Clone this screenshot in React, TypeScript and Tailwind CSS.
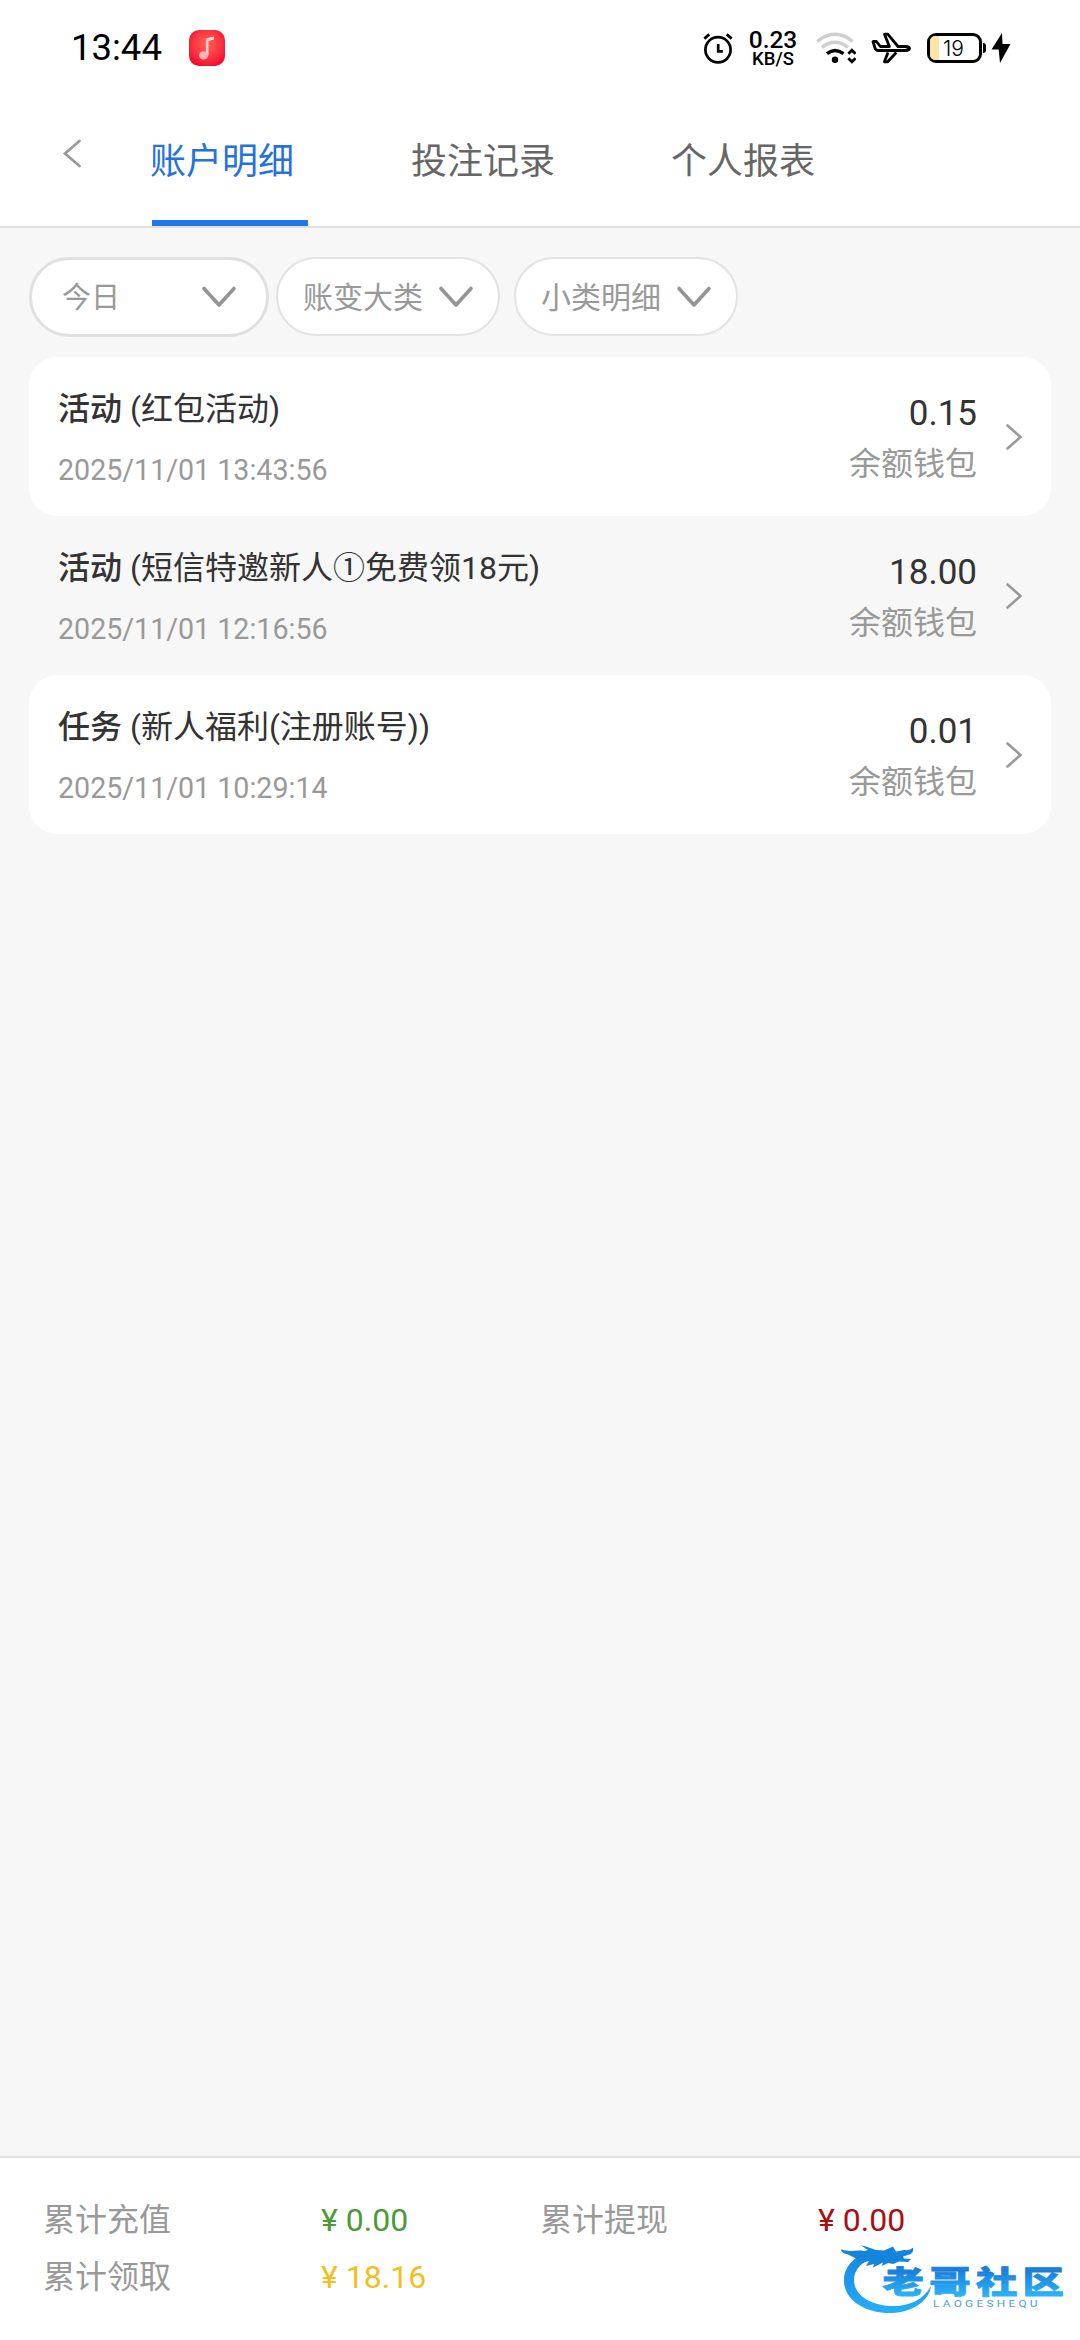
import clsx from 'clsx';

const tabs = ['账户明细', '投注记录', '个人报表'];

interface Entry {
  kind: string;
  detail: string;
  time: string;
  amount: string;
}

const entries: Entry[] = [
  { kind: '活动', detail: '(红包活动)', time: '2025/11/01 13:43:56', amount: '0.15' },
  { kind: '活动', detail: '(短信特邀新人①免费领18元)', time: '2025/11/01 12:16:56', amount: '18.00' },
  { kind: '任务', detail: '(新人福利(注册账号))', time: '2025/11/01 10:29:14', amount: '0.01' },
];

function StatusBar() {
  return (
    <div className="flex h-[96px] shrink-0 items-center pl-[71px] pr-[69px] text-black">
      <span className="w-[118px] pt-px text-[36.5px] leading-none">13:44</span>
      <svg className="h-9 w-9" viewBox="0 0 36 36">
        <defs>
          <radialGradient id="music" cx="50%" cy="40%" r="65%">
            <stop offset="0" stopColor="#ff6258" />
            <stop offset="0.6" stopColor="#fb3440" />
            <stop offset="1" stopColor="#ee0a2c" />
          </radialGradient>
        </defs>
        <rect width="36" height="36" rx="10" fill="url(#music)" />
        <path d="M18.2 25V10.4l5-2.3" fill="none" stroke="#ffd0cc" strokeWidth="2.6" />
        <path d="M17 8.5l8-2v3l-6 1.6z" fill="#ffd0cc" />
        <ellipse cx="14.6" cy="25.4" rx="4.6" ry="4.2" fill="#ffb3b0" />
      </svg>

      <div className="ml-auto flex items-center">
        {/* Alarm */}
        <svg className="h-8 w-[30px]" viewBox="0 0 30 32" fill="none" stroke="#000" strokeWidth="2.7">
          <circle cx="15" cy="17.8" r="12.6" />
          <path d="M15.2 12v7.3h4.6M1.3 6.6l5-4.2M28.7 6.6l-5-4.2" />
        </svg>
        <div className="ml-[15px] flex w-[50px] flex-col items-center font-medium">
          <span className="text-[24.5px] leading-[22px]">0.23</span>
          <span className="text-[18.5px] leading-[17px]">KB/S</span>
        </div>
        {/* Wifi */}
        <svg className="ml-[18px] h-8 w-10" viewBox="0 0 40 32" fill="none">
          <path d="M1.5 9.5C11.5-.2 26.5-.2 36.5 9.5" stroke="#cfcfcf" strokeWidth="3.4" />
          <path d="M6 15.5c8-7 18-7 26 0" stroke="#cfcfcf" strokeWidth="3.4" />
          <path d="M11 21.6c5-4 11-4 16.5 0" stroke="#000" strokeWidth="3.5" />
          <circle cx="19" cy="27.8" r="3.2" fill="#000" />
          <path d="M32.3 21.8l3.6-3.6 3.6 3.6M32.3 26.2l3.6 3.6 3.6-3.6" stroke="#000" strokeWidth="2.8" />
        </svg>
        {/* Airplane mode */}
        <svg
          className="ml-[15px] h-8 w-10"
          viewBox="0 0 40 32"
          fill="none"
          stroke="#000"
          strokeWidth="2.8"
          strokeLinejoin="round"
        >
          <path d="M2 9.5h3.4l4 5h9L13.5 2.2h3.3l10.2 12.3h7c3 0 4.5 1 4.5 2s-1.5 2-4.5 2H7.5c-2 0-3-1-3.5-2.5z" />
          <path d="M17 20.5l-3.6 9.3h3.3l8.6-9.3" />
        </svg>
        {/* Battery */}
        <div className="ml-[16px] flex h-[30px] w-[55px] items-center rounded-[9px] border-3 border-black">
          <div className="h-6 w-[9px] rounded-l-[5px] bg-[#fbe6a8]" />
          <span className="ml-[4px] font-[Inter] text-[21px] leading-none font-light">19</span>
        </div>
        <div className="ml-[1px] h-[10px] w-[3px] rounded-r bg-black" />
        <svg className="ml-[5px] h-8 w-5" viewBox="0 0 20 32">
          <path d="M11 1L.5 17.5h7.2L9 31 19.5 12h-8z" fill="#000" />
        </svg>
      </div>
    </div>
  );
}

function Header() {
  return (
    <div className="flex h-[132px] shrink-0 border-b-2 border-[#e0e0e0]">
      <div className="w-[152px] pt-[43px] pl-[62px]">
        <svg className="h-[30px] w-5" viewBox="0 0 20 30" fill="none" stroke="#999" strokeWidth="2.7" strokeLinecap="round">
          <path d="M17.5 2L3 14.5 17.5 27" />
        </svg>
      </div>
      {tabs.map((tab, index) => (
        <div
          key={tab}
          className={clsx(
            'mr-[104px] flex h-[130px] w-[156px] items-center border-b-6 pt-[8px] text-[36px]',
            index === 0 ? 'border-[#2176ee] text-[#2672dc]' : 'border-transparent text-[#666]'
          )}
        >
          <span className={clsx('whitespace-nowrap', index === 0 ? '-ml-0.5' : '-ml-px')}>{tab}</span>
        </div>
      ))}
    </div>
  );
}

function ChevronDown() {
  return (
    <svg className="h-6 w-9" viewBox="0 0 36 24" fill="none" stroke="#949494" strokeWidth="3.6" strokeLinecap="round">
      <path d="M3 3.5l15 16.5 15-16.5" strokeLinejoin="round" />
    </svg>
  );
}

function Filters() {
  return (
    <div className="flex items-start pt-[29px] pl-[29px] text-[30px] leading-none text-[#999]">
      <div className="flex h-[80px] w-[240px] items-center justify-between rounded-full border-3 border-[#e0e0e0] bg-white pr-[29px] pl-[30px]">
        <span className="pt-[3px] text-[29px]">今日</span>
        <ChevronDown />
      </div>
      <div className="ml-[7px] flex h-[79px] w-[224px] items-center justify-between rounded-full border-2 border-[#e3e3e3] bg-white pr-[24px] pl-[25px]">
        <span className="pt-[3px]">账变大类</span>
        <ChevronDown />
      </div>
      <div className="ml-[14px] flex h-[79px] w-[224px] items-center justify-between rounded-full border-2 border-[#e3e3e3] bg-white pr-[24px] pl-[25px]">
        <span className="pt-[3px]">小类明细</span>
        <ChevronDown />
      </div>
    </div>
  );
}

function EntryRow({ entry, striped }: { entry: Entry; striped: boolean }) {
  return (
    <div className={clsx('flex h-[159px] items-start rounded-[28px] pr-[27px] pl-[29px]', striped && 'bg-white')}>
      <div className="flex-1 pt-[29px]">
        <p className="text-[32px] leading-[46px] text-[#333]">
          <span className="font-medium">{entry.kind}</span> {entry.detail}
        </p>
        <p className="mt-[15px] text-[28.6px] leading-[46px] text-[#999]">{entry.time}</p>
      </div>
      <div className="pt-[33px] text-right">
        <p className="text-[35px] leading-[48px] text-[#333]">{entry.amount}</p>
        <p className="mt-[3px] text-[32px] leading-[46px] text-[#999]">余额钱包</p>
      </div>
      <svg className="mt-[64px] ml-[27px] h-8 w-5" viewBox="0 0 20 32" fill="none" stroke="#999" strokeWidth="2.6" strokeLinecap="round">
        <path d="M3.5 4.5L16.5 16 3.5 27.5" />
      </svg>
    </div>
  );
}

function Logo() {
  return (
    <svg className="absolute top-[72px] left-[830px] h-[100px] w-[250px]" viewBox="0 0 250 100">
      <defs>
        <linearGradient id="ring" x1="0" y1="0" x2="0" y2="1">
          <stop offset="0" stopColor="#1685e0" />
          <stop offset="1" stopColor="#25aef8" />
        </linearGradient>
        <linearGradient id="word" x1="0" y1="0" x2="0" y2="1">
          <stop offset="0.2" stopColor="#1c80da" />
          <stop offset="0.9" stopColor="#2cb6fa" />
        </linearGradient>
      </defs>
      <path
        d="M37 22C22 28 13 39 14 52c1 19 23 32 48 31 21-1 37-12 39-27-8 14-21 20-37 20-24 0-40-11-40-26 0-10 7-18 20-22z"
        fill="url(#ring)"
      />
      {/* Dragon head */}
      <path
        d="M12 19.500c8 3 13 0 22 1.500l4-1-7-4.500c6 .5 10 3 15 4.500l8 .5 9-4 3 5 8-1.500c4 .5 7-.5 9-2.500 1 4-1 6.500-5 7.500l-5 1.500 1 2 7 .5-3 3-9-.5-6 2.500-5-1-6 3 1-3.500-10 5 1-3.500-8 2 3-5-8 2-4-4-9-4.500c-4-1-7-2.500-7-5z"
        fill="#1584dd"
      />
      <text
        transform="translate(52.5 63) scale(1.335 1)"
        fill="url(#word)"
        stroke="url(#word)"
        strokeWidth="0.8"
        className="text-[31px] font-black tracking-[4px]"
      >
        老哥社区
      </text>
      <text
        transform="translate(103 77) scale(1.25 1)"
        fill="#4a9fe0"
        className="text-[9.5px] tracking-[2.6px]"
      >
        LAOGESHEQU
      </text>
    </svg>
  );
}

function Summary() {
  return (
    <div className="relative h-[184px] shrink-0 border-t-2 border-[#e2e2e2] bg-white pt-[34px] pl-[43px]">
      <div className="grid grid-cols-[278px_219px_278px_219px] text-[32px] leading-[57px] text-[#999]">
        <span>累计充值</span>
        <span className="text-[#4c9a35]">¥ 0.00</span>
        <span>累计提现</span>
        <span className="text-[#a80f12]">¥ 0.00</span>
        <span>累计领取</span>
        <span className="text-[#f0c020]">¥ 18.16</span>
      </div>
      <Logo />
    </div>
  );
}

export default function App() {
  return (
    <div className="flex h-[2340px] w-[1080px] flex-col overflow-hidden bg-white font-[Roboto,'Noto_Sans_CJK_SC',sans-serif]">
      <StatusBar />
      <Header />
      <div className="flex-1 bg-[#f7f7f7]">
        <Filters />
        <div className="mx-[29px] mt-[20px]">
          {entries.map((entry, index) => (
            <EntryRow key={entry.time} entry={entry} striped={index % 2 === 0} />
          ))}
        </div>
      </div>
      <Summary />
    </div>
  );
}
